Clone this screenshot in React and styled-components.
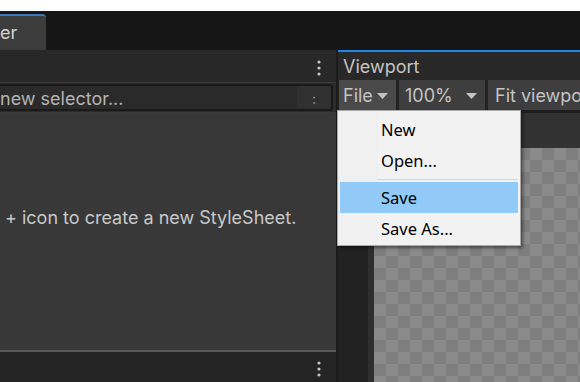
import React from "react";
import styled, { createGlobalStyle } from "styled-components";

const GlobalStyle = createGlobalStyle`
  html, body {
    margin: 0;
    padding: 0;
    background: #ffffff;
    overflow: hidden;
  }
  * {
    box-sizing: border-box;
  }
`;

const menuItems = [
  { label: "New" },
  { label: "Open..." },
  { separator: true },
  { label: "Save", active: true },
  { label: "Save As..." },
];

function Dots() {
  return (
    <svg width="4" height="16" viewBox="0 0 4 16">
      <circle cx="2" cy="2" r="1.6" fill="#c4c4c4" />
      <circle cx="2" cy="8" r="1.6" fill="#c4c4c4" />
      <circle cx="2" cy="14" r="1.6" fill="#c4c4c4" />
    </svg>
  );
}

function Caret() {
  return (
    <svg width="11" height="6" viewBox="0 0 11 6">
      <path d="M0 0 L11 0 L5.5 6 Z" fill="#c4c4c4" />
    </svg>
  );
}

function App() {
  return (
    <Page>
      <GlobalStyle />
      <TopStrip />
      <TabBar>
        <Tab>er</Tab>
      </TabBar>
      <Main>
        <LeftPanel>
          <PanelHeader>
            <Dots />
          </PanelHeader>
          <SearchRow>
            <SearchField>
              <SearchText>new selector...</SearchText>
              <SearchButton>:</SearchButton>
            </SearchField>
          </SearchRow>
          <EmptyContent>+ icon to create a new StyleSheet.</EmptyContent>
          <BottomHeader>
            <Dots />
          </BottomHeader>
        </LeftPanel>
        <Divider />
        <RightPanel>
          <ViewportTitle>Viewport</ViewportTitle>
          <Toolbar>
            <ToolButton $width="57px" $active>
              File
              <Caret />
            </ToolButton>
            <ToolButton $width="86px" $spread>
              100%
              <Caret />
            </ToolButton>
            <ToolButton $grow>Fit viewport</ToolButton>
          </Toolbar>
          <CanvasArea>
            <CanvasGutter />
            <CanvasStripe />
            <CanvasMain>
              <CanvasTop />
              <Checker />
            </CanvasMain>
          </CanvasArea>
          <Menu>
            {menuItems.map((item, i) =>
              item.separator ? (
                <Separator key={i} />
              ) : (
                <MenuItem key={i} $active={item.active}>
                  {item.label}
                </MenuItem>
              )
            )}
          </Menu>
        </RightPanel>
      </Main>
    </Page>
  );
}

const Page = styled.div`
  width: 580px;
  height: 382px;
  display: flex;
  flex-direction: column;
  font-family: Inter, "Noto Sans", sans-serif;
  overflow: hidden;
`;

const TopStrip = styled.div`
  height: 11px;
  background: #ffffff;
`;

const TabBar = styled.div`
  height: 39px;
  background: #161616;
  padding-top: 3px;
  display: flex;
`;

const Tab = styled.div`
  width: 46px;
  background: #3c3c3c;
  border-top: 2px solid #3a79bb;
  border-top-right-radius: 4px;
  color: #d2d2d2;
  font-size: 18px;
  line-height: 34px;
`;

const Main = styled.div`
  flex: 1;
  display: flex;
  min-height: 0;
`;

const LeftPanel = styled.div`
  width: 336px;
  flex-shrink: 0;
  display: flex;
  flex-direction: column;
  background: #282828;
`;

const PanelHeader = styled.div`
  height: 32px;
  display: flex;
  align-items: center;
  justify-content: flex-end;
  padding-right: 15px;
  padding-top: 3px;
`;

const SearchRow = styled.div`
  height: 31px;
  border-top: 1px solid #3a3a3a;
  border-bottom: 1px solid #3a3a3a;
  padding: 1px 3px 1px 0;
  background: #2b2b2b;
`;

const SearchField = styled.div`
  height: 100%;
  display: flex;
  border: 2px solid #191919;
  border-left: none;
  border-radius: 0 4px 4px 0;
  background: #2a2a2a;
  overflow: hidden;
`;

const SearchText = styled.div`
  flex: 1;
  color: #b4b4b4;
  font-size: 18px;
  line-height: 26px;
  white-space: nowrap;
`;

const SearchButton = styled.div`
  width: 34px;
  background: #303030;
  color: #9a9a9a;
  font-size: 14px;
  line-height: 26px;
  text-align: center;
`;

const EmptyContent = styled.div`
  flex: 1;
  background: #383838;
  color: #c8c8c8;
  font-size: 18px;
  padding: 94px 0 0 5px;
  border-bottom: 2px solid #585858;
  white-space: nowrap;
`;

const BottomHeader = styled.div`
  height: 30px;
  background: #242424;
  display: flex;
  align-items: flex-end;
  justify-content: flex-end;
  padding: 0 15px 5px 0;
`;

const Divider = styled.div`
  width: 2px;
  flex-shrink: 0;
  background: #1b1b1b;
`;

const RightPanel = styled.div`
  flex: 1;
  min-width: 0;
  position: relative;
  display: flex;
  flex-direction: column;
  background: #282828;
  border-top: 2px solid #1a86e8;
`;

const ViewportTitle = styled.div`
  height: 28px;
  color: #c4c4c4;
  font-size: 18px;
  line-height: 30px;
  padding-left: 5px;
`;

const Toolbar = styled.div`
  height: 30px;
  display: flex;
  gap: 3px;
  padding-left: 1px;
  background: #222222;
  overflow: hidden;
`;

const ToolButton = styled.div`
  width: ${(p) => p.$width || "auto"};
  flex: ${(p) => (p.$grow ? 1 : "none")};
  min-width: 0;
  display: flex;
  align-items: center;
  justify-content: ${(p) => (p.$spread ? "space-between" : "flex-start")};
  gap: 4px;
  padding: 1px 8px 0 4px;
  padding-left: ${(p) => (p.$grow ? "7px" : p.$spread ? "6px" : "4px")};
  background: ${(p) => (p.$active ? "#4a4a4a" : "#3e3e3e")};
  color: #c4c4c4;
  font-size: 18px;
  white-space: nowrap;
  overflow: hidden;
`;

const CanvasArea = styled.div`
  flex: 1;
  display: flex;
  border-top: 3px solid #1e1e1e;
`;

const CanvasGutter = styled.div`
  width: 30px;
  background: #222222;
`;

const CanvasStripe = styled.div`
  width: 6px;
  background: #2e2e2e;
`;

const CanvasMain = styled.div`
  flex: 1;
  display: flex;
  flex-direction: column;
`;

const CanvasTop = styled.div`
  height: 35px;
  background: #323232;
`;

const Checker = styled.div`
  flex: 1;
  background: repeating-conic-gradient(#8a8a8a 0 25%, #7e7e7e 0 50%) 0 0 / 24px 24px;
`;

const Menu = styled.div`
  position: absolute;
  left: -1px;
  top: 58px;
  width: 184px;
  height: 136px;
  padding: 3px 2px 1px;
  background: linear-gradient(to right, #f0f0f0 40px, #f2f2f2 40px);
  border: 1px solid #a8a8a8;
  box-shadow: 2px 2px 3px rgba(0, 0, 0, 0.45);
  font-family: "Noto Sans", "Open Sans", sans-serif;
`;

const MenuItem = styled.div`
  height: 31px;
  line-height: 31px;
  padding-left: 41px;
  font-size: 16.5px;
  color: #000000;
  background: ${(p) => (p.$active ? "#91c9f7" : "transparent")};
`;

const Separator = styled.div`
  height: 6px;
  margin-left: 37px;
  padding-top: 3px;
  &::after {
    content: "";
    display: block;
    height: 1px;
    background: #d7d7d7;
  }
`;

export default App;
